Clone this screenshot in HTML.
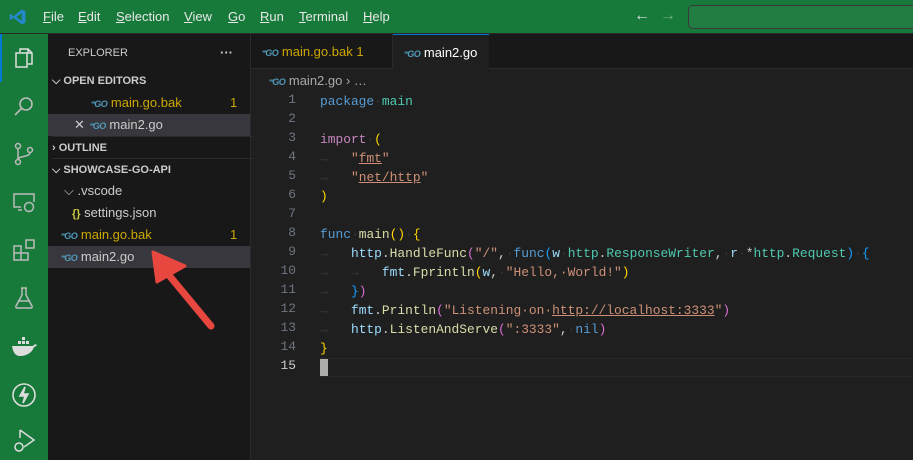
<!DOCTYPE html>
<html><head><meta charset="utf-8"><style>
*{margin:0;padding:0;box-sizing:border-box}
body{width:913px;height:460px;overflow:hidden;background:#1f1f1f;font-family:"Liberation Sans",sans-serif;font-size:13px;color:#ccc;position:relative}
.title{position:absolute;left:0;top:0;width:913px;height:34px;background:#187a3a;border-bottom:1px solid #2b2b2b}
.menu{position:absolute;top:9px;color:#e8e8e8;font-size:13px}
.menu u{text-decoration:underline}
.act{position:absolute;left:0;top:34px;width:48px;height:426px;background:#187a3a}
.side{position:absolute;left:48px;top:34px;width:203px;height:426px;background:#181818;border-right:1px solid #2b2b2b}
.row{position:absolute;left:0;width:202px;height:22px;line-height:22px;white-space:nowrap}
.hdr{font-weight:bold;font-size:11px;color:#ccc}
.go{color:#519aba;font-weight:bold;font-size:9px;font-style:italic;letter-spacing:-0.5px}
.y{color:#cca700}
.tabs{position:absolute;left:251px;top:34px;width:662px;height:35px;background:#181818;border-bottom:1px solid #2b2b2b}
.tab{position:absolute;top:0;height:35px;line-height:35px;padding-left:10px;font-size:13px;white-space:nowrap}
.code{position:absolute;left:251px;top:92px;font-family:"Liberation Mono",monospace;font-size:12.9px}
.ln{position:absolute;left:0;width:45px;text-align:right;color:#6e7681}
.l{position:absolute;height:19px;line-height:19px;white-space:pre}
.tx{position:absolute;left:69px;white-space:pre;color:#ccc}
.k{color:#569cd6}.t{color:#4ec9b0}.s{color:#ce9178}.f{color:#dcdcaa}.v{color:#9cdcfe}.p1{color:#ffd700}.p2{color:#da70d6}.p3{color:#179fff}.m{color:#c586c0}
.ws{color:#3b3b3b}
.su{text-decoration:underline;text-decoration-color:#ce9178}
</style></head><body>
<div class="title">
<svg style="position:absolute;left:9px;top:8px" width="18" height="18" viewBox="0 0 24 24"><path d="M17 2 L22 4.5 V19.5 L17 22 L6 13 L2.5 16 L1 15 V9 L2.5 8 L6 11 Z M17 7 L10 12 L17 17 Z" fill="#2489ca"/></svg>
<span class="menu" style="left:43px"><u>F</u>ile</span>
<span class="menu" style="left:78px"><u>E</u>dit</span>
<span class="menu" style="left:116px"><u>S</u>election</span>
<span class="menu" style="left:184px"><u>V</u>iew</span>
<span class="menu" style="left:228px"><u>G</u>o</span>
<span class="menu" style="left:260px"><u>R</u>un</span>
<span class="menu" style="left:299px"><u>T</u>erminal</span>
<span class="menu" style="left:363px"><u>H</u>elp</span>
<span style="position:absolute;left:634px;top:7px;color:#ddd;font-size:16px">←</span>
<span style="position:absolute;left:660px;top:7px;color:#6fae82;font-size:16px">→</span>
<div style="position:absolute;left:688px;top:5px;width:240px;height:24px;border:1px solid #3a3a3a;border-radius:5px;background:#217d42"></div>
</div>
<div class="act">
<div style="position:absolute;left:0;top:0;width:2px;height:48px;background:#0078d4"></div>
<svg style="position:absolute;left:12px;top:12px" width="24" height="24" viewBox="0 0 24 24" fill="none" stroke="#e0e0e0" stroke-width="1.5"><path d="M8 6V3h8l4 4v11h-4M4 7h11v14H4z M16 3v4h4"/></svg>
<svg style="position:absolute;left:12px;top:60px" width="24" height="24" viewBox="0 0 24 24" fill="none" stroke="#bbb" stroke-width="1.6"><circle cx="14" cy="10" r="6"/><path d="M10 14l-7 7"/></svg>
<svg style="position:absolute;left:12px;top:108px" width="24" height="24" viewBox="0 0 24 24" fill="none" stroke="#bbb" stroke-width="1.5"><circle cx="6" cy="4" r="2.5"/><circle cx="6" cy="20" r="2.5"/><circle cx="18" cy="8" r="2.5"/><path d="M6 6.5v11M18 10.5c0 5-12 3-12 7"/></svg>
<svg style="position:absolute;left:12px;top:156px" width="24" height="24" viewBox="0 0 24 24" fill="none" stroke="#bbb" stroke-width="1.5"><path d="M9 17H2V4h20v8M6 20h4"/><circle cx="17" cy="17" r="4.5"/></svg>
<svg style="position:absolute;left:12px;top:204px" width="24" height="24" viewBox="0 0 24 24" fill="none" stroke="#bbb" stroke-width="1.5"><path d="M2 8h7v14H2zM2 15h14v7H9M14 2h8v8h-8z"/></svg>
<svg style="position:absolute;left:12px;top:252px" width="24" height="24" viewBox="0 0 24 24" fill="none" stroke="#bbb" stroke-width="1.5"><path d="M9 2h6M10 2v7L4 20c-.5 1 0 2 1 2h14c1 0 1.5-1 1-2L14 9V2M7 15h10"/></svg>
<svg style="position:absolute;left:10px;top:300px" width="28" height="24" viewBox="0 0 28 24"><path d="M2 12h21c1-2 3-2 4-1-1 1-2 2-3 2-2 6-8 9-14 9-5 0-7-4-8-10z" fill="#ddd"/><rect x="8" y="7" width="3" height="3" fill="#ddd"/><rect x="12" y="7" width="3" height="3" fill="#ddd"/><rect x="12" y="3" width="3" height="3" fill="#ddd"/><rect x="16" y="7" width="3" height="3" fill="#ddd"/></svg>
<svg style="position:absolute;left:11px;top:348px" width="26" height="26" viewBox="0 0 26 26" fill="none" stroke="#ddd" stroke-width="1.6"><circle cx="13" cy="13" r="11"/><path d="M14 5l-5 9h5l-2 7 5-9h-5z" fill="#ddd"/></svg>
<svg style="position:absolute;left:12px;top:394px" width="24" height="26" viewBox="0 0 24 26" fill="none" stroke="#ddd" stroke-width="1.5"><path d="M8 2l14 10-10 7M8 2v8"/><circle cx="7" cy="19" r="4"/></svg>
</div>
<div class="side">
<div class="row" style="top:8px;left:20px;font-size:11px">EXPLORER</div>
<div class="row" style="top:8px;left:172px;width:20px;font-weight:bold">···</div>
<div class="row hdr" style="top:36px;left:4px">⌵ OPEN EDITORS</div>
<div class="row" style="top:58px;left:42px"><span class="go">⁼GO</span> <span class="y">main.go.bak</span><span class="y" style="position:absolute;left:140px">1</span></div>
<div class="row" style="top:80px;background:#37373d;padding-left:26px"><span style="color:#ccc">✕</span> <span class="go">⁼GO</span> main2.go</div>
<div class="row hdr" style="top:102px;left:4px;border-top:1px solid #2b2b2b">› OUTLINE</div>
<div class="row hdr" style="top:124px;left:4px;border-top:1px solid #2b2b2b">⌵ SHOWCASE-GO-API</div>
<div class="row" style="top:146px;left:16px">⌵ .vscode</div>
<div class="row" style="top:168px;left:24px"><span style="color:#cbcb41;font-weight:bold;font-size:11px">{}</span> settings.json</div>
<div class="row" style="top:190px;left:12px"><span class="go">⁼GO</span> <span class="y">main.go.bak</span><span class="y" style="position:absolute;left:170px">1</span></div>
<div class="row" style="top:212px;background:#37373d;padding-left:12px"><span class="go">⁼GO</span> main2.go</div>
<svg style="position:absolute;left:95px;top:210px" width="80" height="90" viewBox="0 0 80 90"><path d="M68 82L20 24" stroke="#e8473f" stroke-width="7" stroke-linecap="round"/><path d="M10 8L42 22L14 38z" fill="#e8473f" stroke="#e8473f" stroke-width="3" stroke-linejoin="round"/></svg>
</div>
<div class="tabs">
<div class="tab" style="left:0;width:142px;border-right:1px solid #2b2b2b"><span class="go">⁼GO</span> <span class="y">main.go.bak 1</span></div>
<div class="tab" style="left:142px;width:96px;background:#1f1f1f;border-top:1px solid #0078d4;height:36px;color:#fff"><span class="go">⁼GO</span> main2.go</div>
</div>
<div style="position:absolute;left:268px;top:73px;font-size:13px;color:#a9a9a9"><span class="go">⁼GO</span> main2.go › …</div>
<div class="code">
<div class="ln" style="top:0">1</div><div class="ln" style="top:19px">2</div><div class="ln" style="top:38px">3</div><div class="ln" style="top:57px">4</div><div class="ln" style="top:76px">5</div><div class="ln" style="top:95px">6</div><div class="ln" style="top:114px">7</div><div class="ln" style="top:133px">8</div><div class="ln" style="top:152px">9</div><div class="ln" style="top:171px">10</div><div class="ln" style="top:190px">11</div><div class="ln" style="top:209px">12</div><div class="ln" style="top:228px">13</div><div class="ln" style="top:247px">14</div><div class="ln" style="top:266px;color:#ccc">15</div>
<div class="l tx" style="top:0"><span class="k">package</span><span class="ws">·</span><span class="t">main</span></div>
<div class="l tx" style="top:38px"><span class="m">import</span><span class="ws">·</span><span class="p1">(</span></div>
<div class="l tx" style="top:57px"><span class="ws">→   </span><span class="s">"<span class="su">fmt</span>"</span></div>
<div class="l tx" style="top:76px"><span class="ws">→   </span><span class="s">"<span class="su">net/http</span>"</span></div>
<div class="l tx" style="top:95px"><span class="p1">)</span></div>
<div class="l tx" style="top:133px"><span class="k">func</span><span class="ws">·</span><span class="f">main</span><span class="p1">()</span><span class="ws">·</span><span class="p1">{</span></div>
<div class="l tx" style="top:152px"><span class="ws">→   </span><span class="v">http</span>.<span class="f">HandleFunc</span><span class="p2">(</span><span class="s">"/"</span>,<span class="ws">·</span><span class="k">func</span><span class="p3">(</span><span class="v">w</span><span class="ws">·</span><span class="t">http</span>.<span class="t">ResponseWriter</span>,<span class="ws">·</span><span class="v">r</span><span class="ws">·</span>*<span class="t">http</span>.<span class="t">Request</span><span class="p3">)</span><span class="ws">·</span><span class="p3">{</span></div>
<div class="l tx" style="top:171px"><span class="ws">→   →   </span><span class="v">fmt</span>.<span class="f">Fprintln</span><span class="p1">(</span><span class="v">w</span>,<span class="ws">·</span><span class="s">"Hello,·World!"</span><span class="p1">)</span></div>
<div class="l tx" style="top:190px"><span class="ws">→   </span><span class="p3">}</span><span class="p2">)</span></div>
<div class="l tx" style="top:209px"><span class="ws">→   </span><span class="v">fmt</span>.<span class="f">Println</span><span class="p2">(</span><span class="s">"Listening·on·<span class="su">http://localhost:3333</span>"</span><span class="p2">)</span></div>
<div class="l tx" style="top:228px"><span class="ws">→   </span><span class="v">http</span>.<span class="f">ListenAndServe</span><span class="p2">(</span><span class="s">":3333"</span>,<span class="ws">·</span><span class="k">nil</span><span class="p2">)</span></div>
<div class="l tx" style="top:247px"><span class="p1">}</span></div>
<div style="position:absolute;left:69px;top:266px;width:600px;height:19px;border-top:1px solid #282828;border-bottom:1px solid #282828"></div>
<div style="position:absolute;left:69px;top:267px;width:8px;height:17px;background:#aeafad"></div>
</div>
</body></html>
